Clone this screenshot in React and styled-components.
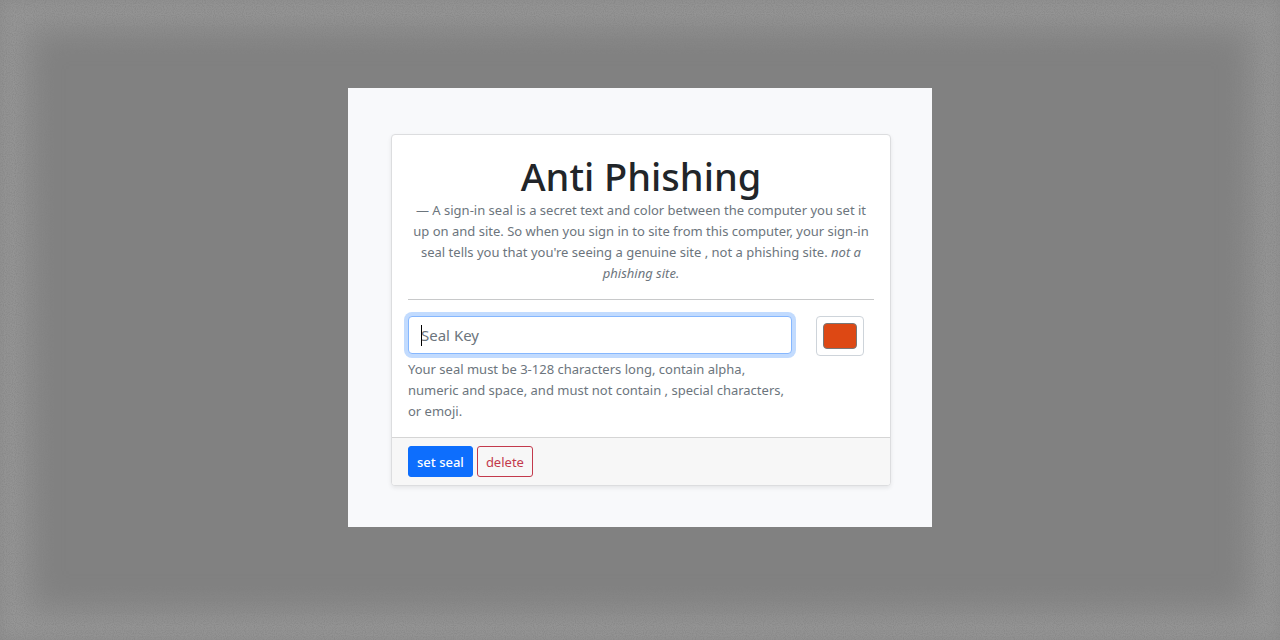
import React from "react";
import styled, { createGlobalStyle, css } from "styled-components";

const GlobalStyle = createGlobalStyle`
  *, *::before, *::after { box-sizing: border-box; }
  body {
    margin: 0;
    background: #818181;
    color: #212529;
    font-family: "Noto Sans", "Open Sans", sans-serif;
    font-size: 15px;
    line-height: 24px;
  }
`;

const Page = styled.main`
  position: relative;
  min-height: 100vh;
  padding: 88px 16px;
  display: flex;
  justify-content: center;
  align-items: flex-start;
  box-shadow: inset 0 0 16px rgba(0, 0, 0, 0.08), inset 0 0 32px 30px #979797;
`;

const Grain = styled.svg`
  position: absolute;
  inset: 0;
  width: 100%;
  height: 100%;
  pointer-events: none;
`;

const Panel = styled.section`
  position: relative;
  width: 100%;
  max-width: 584px;
  padding: 46px 41px 41px 43px;
  background: #f8f9fb;
`;

const Card = styled.form`
  border: 1px solid #dcdddf;
  border-radius: 4px;
  background: #fff;
  box-shadow: 0 2px 4px rgba(0, 0, 0, 0.08);
  overflow: hidden;
`;

const CardBody = styled.div`
  padding: 18px 16px 15px;
`;

const Title = styled.h1`
  margin: 0;
  font-size: 38px;
  font-weight: 500;
  line-height: 47px;
  text-align: center;
`;

const smallText = css`
  margin: 0;
  color: #6c757d;
  font-size: 13px;
  line-height: 21px;
`;

const Description = styled.p`
  ${smallText}
  text-align: center;
`;

const Divider = styled.hr`
  height: 1px;
  margin: 15px 0 16px;
  border: 0;
  background: #c8c9ca;
`;

const Fields = styled.div`
  display: flex;
  align-items: flex-start;
  gap: 24px;
`;

const KeyField = styled.div`
  position: relative;
  flex: 0 1 384px;
`;

const KeyInput = styled.input`
  display: block;
  width: 100%;
  height: 38px;
  padding: 6px 12px;
  border: 1px solid #86b7fe;
  border-radius: 4px;
  outline: 0;
  background: #fff;
  box-shadow: 0 0 0 4px #c2dbfe;
  color: #212529;
  font: inherit;
  caret-color: transparent;
  &::placeholder { color: #6c757d; opacity: 1; }
`;

const Caret = styled.span`
  position: absolute;
  top: 9px;
  left: 13px;
  width: 1px;
  height: 21px;
  background: #000;
`;

const Hint = styled.p`
  ${smallText}
  margin-top: 5px;
`;

const ColorInput = styled.input`
  flex: none;
  width: 48px;
  height: 40px;
  padding: 6px;
  border: 1px solid #ced4da;
  border-radius: 4px;
  background: #fff;
  appearance: none;
  &::-webkit-color-swatch-wrapper { padding: 0; }
  &::-webkit-color-swatch {
    border: 1px solid #777;
    border-radius: 4px;
  }
`;

const CardFooter = styled.footer`
  display: flex;
  gap: 4px;
  padding: 8px 16px;
  border-top: 1px solid #d5d5d5;
  background: #f7f7f7;
`;

const Button = styled.button`
  height: 31px;
  padding: 2px 8px 0;
  border: 1px solid ${(p) => (p.$primary ? "#0d6efd" : "#c33a4c")};
  border-radius: 3px;
  background: ${(p) => (p.$primary ? "#0d6efd" : "transparent")};
  color: ${(p) => (p.$primary ? "#fff" : "#c33a4c")};
  font-family: inherit;
  font-size: 13px;
  font-weight: ${(p) => (p.$primary ? 500 : 400)};
  line-height: 21px;
`;

export default function App() {
  return (
    <>
      <GlobalStyle />
      <Page>
        <Grain aria-hidden="true">
          <defs>
            <filter id="grain" x="0" y="0" width="100%" height="100%" colorInterpolationFilters="sRGB">
              <feTurbulence type="fractalNoise" baseFrequency="0.9" numOctaves="1" seed="4" />
              <feColorMatrix values="0 0 0 0 0.506  0 0 0 0 0.506  0 0 0 0 0.506  3 0 0 0 -1.2" />
            </filter>
          </defs>
          <rect width="100%" height="100%" filter="url(#grain)" opacity="0.5" />
        </Grain>
        <Panel>
          <Card onSubmit={(event) => event.preventDefault()}>
            <CardBody>
              <Title>Anti Phishing</Title>
              <Description>
                — A sign-in seal is a secret text and color between the computer you set it up on
                and site. So when you sign in to site from this computer, your sign-in seal tells
                you that you're seeing a genuine site , not a phishing site. <em>not a phishing site.</em>
              </Description>
              <Divider />
              <Fields>
                <KeyField>
                  <KeyInput type="text" placeholder="Seal Key" aria-label="Seal Key" aria-describedby="seal-hint" />
                  <Caret />
                  <Hint id="seal-hint">
                    Your seal must be 3-128 characters long, contain alpha, numeric and space, and
                    must not contain , special characters, or emoji.
                  </Hint>
                </KeyField>
                <ColorInput type="color" defaultValue="#dd4814" aria-label="Seal color" />
              </Fields>
            </CardBody>
            <CardFooter>
              <Button type="submit" $primary>set seal</Button>
              <Button type="button">delete</Button>
            </CardFooter>
          </Card>
        </Panel>
      </Page>
    </>
  );
}
